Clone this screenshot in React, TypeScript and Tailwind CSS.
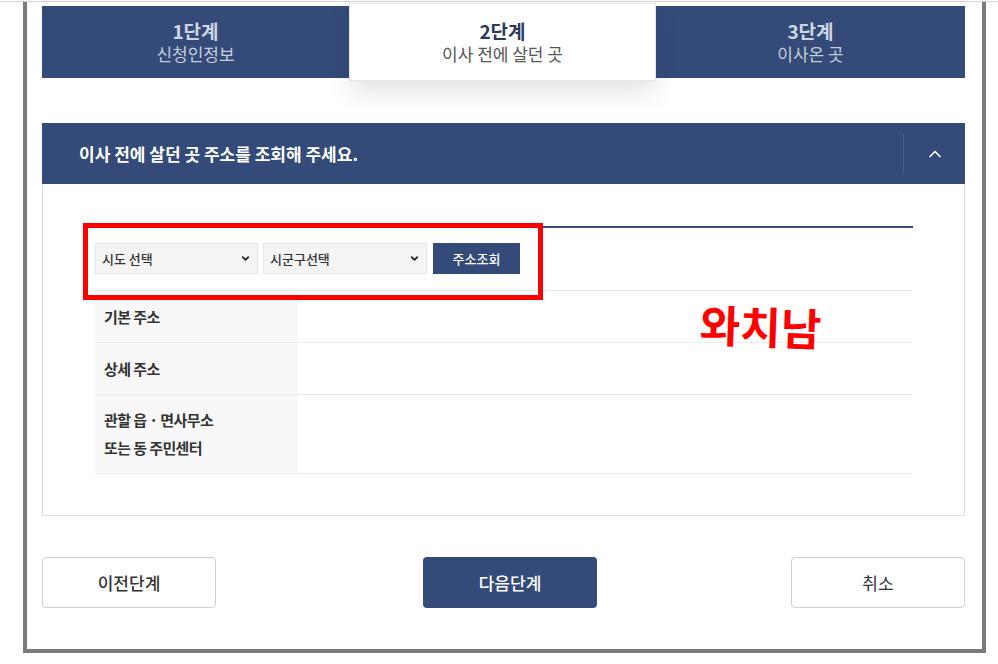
import { ChevronDown, ChevronUp } from "lucide-react";

const steps = [
  { step: "1단계", label: "신청인정보" },
  { step: "2단계", label: "이사 전에 살던 곳" },
  { step: "3단계", label: "이사온 곳" },
];

const rows = [
  { label: ["기본 주소"], h: "h-[52px]" },
  { label: ["상세 주소"], h: "h-[52px]" },
  { label: ["관할 읍 · 면사무소", "또는 동 주민센터"], h: "h-[79px]" },
];

function StepTabs() {
  return (
    <div className="flex h-[78px]">
      {steps.map((s, i) =>
        i === 1 ? (
          <div
            key={s.step}
            className="relative z-10 w-[307px] bg-white border border-[#e3e5ea] shadow-[0_12px_22px_rgba(40,50,80,0.12)] flex flex-col items-center justify-center"
          >
            <span className="text-[19px] font-bold leading-[23px] text-[#2c3b5c]">{s.step}</span>
            <span className="text-[17px] leading-[23px] text-[#555]">{s.label}</span>
          </div>
        ) : (
          <div
            key={s.step}
            className={`my-[3px] bg-[#344a78] flex flex-col items-center justify-center ${i === 0 ? "w-[307px]" : "flex-1"}`}
          >
            <span className="text-[19px] font-bold leading-[23px] text-[#cfd7e5]">{s.step}</span>
            <span className="text-[17px] leading-[23px] text-[#c5cedd]">{s.label}</span>
          </div>
        )
      )}
    </div>
  );
}

function FakeSelect({ text, width }: { text: string; width: string }) {
  return (
    <div className={`relative ${width} h-[31px]`}>
      <select className="appearance-none w-full h-full bg-[#f4f4f4] border border-[#e6e6e6] pl-[6px] text-[13px] font-medium text-[#333] outline-none">
        <option>{text}</option>
      </select>
      <ChevronDown
        className="absolute right-[7px] top-[10px] w-[11px] h-[11px] text-[#222] pointer-events-none"
        strokeWidth={4}
      />
    </div>
  );
}

export default function App() {
  return (
    <div className="relative w-[998px] h-[664px] bg-white overflow-hidden font-['Noto_Sans_CJK_KR','Noto_Sans',sans-serif]">
      <div className="h-px mt-px bg-[#d2d2d2]" />
      <div className="ml-[23px] w-[963px] h-[651px] border-x-4 border-b-4 border-[#7b7b7b] pl-[15px] pr-[17px] pt-px">
        <StepTabs />

        {/* Section header */}
        <div className="mt-[42px] h-[61px] bg-[#344a78] flex items-center">
          <h2 className="flex-1 pl-[37px] text-[17px] font-bold text-white">
            이사 전에 살던 곳 주소를 조회해 주세요.
          </h2>
          <div className="w-[62px] h-[40px] border-l border-[#4a5f88] flex items-center justify-center">
            <ChevronUp className="w-[20px] h-[20px] text-white" strokeWidth={2} />
          </div>
        </div>

        {/* Content */}
        <div className="h-[332px] border-x border-b border-[#dcdcdc] pl-[52px] pr-[51px] pt-[42px]">
          <div className="h-[2px] bg-[#344a78]" />
          <div className="flex items-center h-[62px] pb-px">
            <FakeSelect text="시도 선택" width="w-[163px]" />
            <div className="ml-[5px]">
              <FakeSelect text="시군구선택" width="w-[164px]" />
            </div>
            <button className="ml-[6px] w-[87px] h-[31px] bg-[#344a78] text-white text-[13px] font-medium">
              주소조회
            </button>
          </div>
          <div className="border-t border-[#ececec]">
            {rows.map((r) => (
              <div key={r.label[0]} className={`flex ${r.h} border-b border-[#ececec]`}>
                <div className="w-[203px] bg-[#f8f8f8] pl-[9px] flex flex-col justify-center">
                  {r.label.map((l) => (
                    <span key={l} className="text-[15px] font-bold leading-[28px] text-[#333] tracking-[-0.6px]">
                      {l}
                    </span>
                  ))}
                </div>
                <div className="flex-1" />
              </div>
            ))}
          </div>
        </div>

        {/* Buttons */}
        <div className="flex mt-[41px]">
          <button className="w-[174px] h-[51px] rounded-[4px] border border-[#cfcfcf] bg-white text-[17px] font-medium text-[#333]">
            이전단계
          </button>
          <button className="ml-[207px] w-[174px] h-[51px] rounded-[4px] bg-[#344a78] text-[17px] font-medium text-white">
            다음단계
          </button>
          <button className="ml-auto w-[174px] h-[51px] rounded-[4px] border border-[#cfcfcf] bg-white text-[17px] text-[#333]">
            취소
          </button>
        </div>
      </div>

      {/* Red annotation box */}
      <div className="absolute left-[83px] top-[223px] w-[460px] h-[77px] border-[5px] border-[#ff0000]" />
      <div className="absolute left-[700px] top-[303px] text-[44px] leading-none font-bold text-[#ff0000] rotate-[2deg]">
        와치남
      </div>
    </div>
  );
}
